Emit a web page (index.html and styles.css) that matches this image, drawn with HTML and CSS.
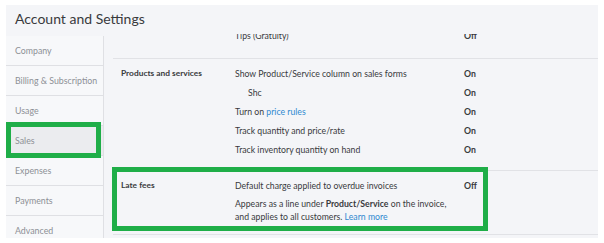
FILE: index.html
```html
<!DOCTYPE html>
<html lang="en">
<head>
  <meta charset="UTF-8" />
  <title>Account and Settings</title>
  <link rel="stylesheet" href="styles.css">
</head>
<body>

<div class="window">
  <div class="header">Account and Settings</div>

  <div class="main">
    <div class="sidebar">
      <div class="nav-item">Company</div>
      <div class="nav-item">Billing &amp; Subscription</div>
      <div class="nav-item">Usage</div>
      <div class="nav-item active">Sales</div>
      <div class="nav-item">Expenses</div>
      <div class="nav-item">Payments</div>
      <div class="nav-item">Advanced</div>
    </div>

    <div class="content">
      <div class="scroller">
        <div class="section first">
          <div class="label"></div>
          <div class="rows">
            <div class="row">
              <span class="desc">Tips (Gratuity)</span>
              <span class="status">Off</span>
            </div>
          </div>
        </div>

        <div class="section">
          <div class="label">Products and services</div>
          <div class="rows">
            <div class="row">
              <span class="desc">Show Product/Service column on sales forms</span>
              <span class="status">On</span>
            </div>
            <div class="row">
              <span class="desc indent">Shc</span>
              <span class="status">On</span>
            </div>
            <div class="row">
              <span class="desc">Turn on <a href="#">price rules</a></span>
              <span class="status">On</span>
            </div>
            <div class="row">
              <span class="desc">Track quantity and price/rate</span>
              <span class="status">On</span>
            </div>
            <div class="row">
              <span class="desc">Track inventory quantity on hand</span>
              <span class="status">On</span>
            </div>
          </div>
        </div>

        <div class="section">
          <div class="label">Late fees</div>
          <div class="rows">
            <div class="row">
              <span class="desc">Default charge applied to overdue invoices</span>
              <span class="status">Off</span>
            </div>
            <p class="note">
              Appears as a line under <b>Product/Service</b> on the invoice,<br>
              and applies to all customers. <a href="#">Learn more</a>
            </p>
          </div>
        </div>
      </div>
    </div>
  </div>

  <!-- green highlight boxes drawn over the screenshot -->
  <div class="mark mark-sales"></div>
  <div class="mark mark-fees"></div>
</div>

</body>
</html>
```

FILE: styles.css
```css
body {
  margin: 0;
  background: #fff;
  font-family: 'Lato', 'Liberation Sans', sans-serif;
  color: #393a3d;
}

.window {
  position: relative;
  margin: 5px 0 0 6px;
  width: 592px;
  height: 233px;
  background: #f4f5f8;
  overflow: hidden;
}

.header {
  height: 29px;
  padding-left: 9px;
  padding-top: 5px;
  box-sizing: border-box;
  font-size: 14px;
  line-height: 18px;
  color: #393a3d;
}

.main {
  display: flex;
  height: 204px;
}

/* menu de gauche */
.sidebar {
  width: 97px;
  margin-top: 2px;
  border-right: 1px solid #dfe0e4;
  background: #f7f8fa;
}

.nav-item {
  height: 29px;
  line-height: 29px;
  padding-left: 9px;
  font-size: 8.8px;
  color: #8d9096;
  border-bottom: 1px solid #dfe0e4;
}

.nav-item.active {
  background: #ebecef;
}

/* panneau des réglages */
.content {
  flex: 1;
  overflow: hidden;
}

.scroller {
  margin-top: -13px;
  padding-left: 9px;
}

.section {
  display: flex;
  padding: 5px 0 11px 8px;
  border-bottom: 1px solid #e1e2e6;
  font-size: 8.7px;
}

.section.first {
  padding-bottom: 13px;
}

.label {
  width: 114px;
  flex-shrink: 0;
  line-height: 19px;
  font-weight: 700;
  font-size: 8.4px;
  color: #393a3d;
}

.rows {
  flex: 1;
}

.row {
  display: flex;
  height: 19px;
  line-height: 19px;
}

.desc {
  width: 229px;
  flex-shrink: 0;
  color: #393a3d;
}

.desc.indent {
  padding-left: 13px;
  box-sizing: border-box;
}

.status {
  font-weight: 700;
}

a {
  color: #2f89d0;
  text-decoration: none;
}

.note {
  margin: 3px 0 0;
  line-height: 12.5px;
}

.note b {
  font-weight: 700;
}

.mark {
  position: absolute;
  border: 5px solid #1fae48;
  box-sizing: border-box;
}

.mark-sales {
  left: 0;
  top: 117px;
  width: 95px;
  height: 36px;
}

.mark-fees {
  left: 106px;
  top: 162px;
  width: 376px;
  height: 64px;
}
```
